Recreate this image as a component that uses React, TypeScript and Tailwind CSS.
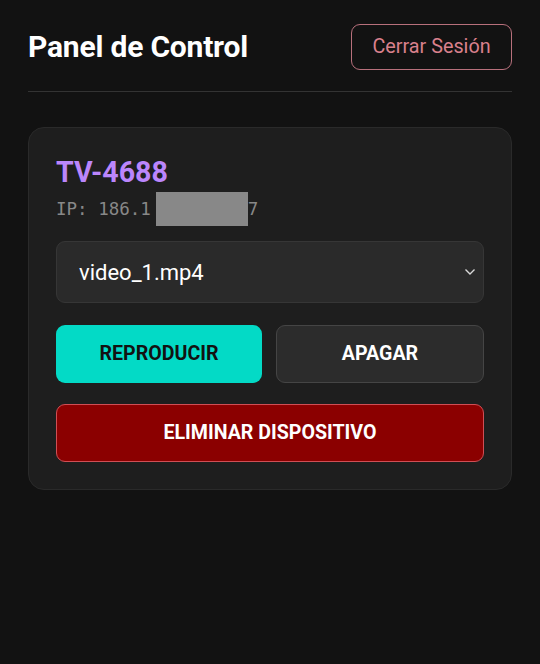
import React from "react";

export default function App() {
  return (
    <div className="min-h-[664px] w-[540px] bg-[#121212] px-[28px] pt-[24px] text-white" style={{ fontFamily: "Roboto, 'Noto Sans', sans-serif" }}>
      <header className="flex items-center justify-between pb-[21px] border-b border-[#333333]">
        <h1 className="text-[30px] font-bold leading-none tracking-[-0.2px]">Panel de Control</h1>
        <button className="h-[46px] w-[161px] rounded-[9px] border border-[#b8707c] text-[19.8px] text-[#d9808c]">Cerrar Sesión</button>
      </header>

      <div className="mt-[35px] rounded-[16px] border border-[#2a2a2a] bg-[#1e1e1e] px-[27px] pt-[27px] pb-[27px]">
        <h2 className="text-[28.6px] font-bold leading-[34px] text-[#bb86fc]">TV-4688</h2>
        <div className="mt-[3px] flex h-[34px] items-center text-[17.5px] text-[#888888]" style={{ fontFamily: "'DejaVu Sans Mono', monospace" }}>
          <span>IP: 186.1</span>
          <span className="ml-[5px] inline-block h-[34px] w-[92px] bg-[#888888]"></span>
          <span className="ml-[0px]">7</span>
        </div>

        <div className="mt-[15px] flex h-[62px] items-center justify-between rounded-[9px] border border-[#363636] bg-[#2a2a2a] pl-[22px] pr-[7px]">
          <span className="text-[22px] text-white">video_1.mp4</span>
          <svg width="12" height="8" viewBox="0 0 12 8" fill="none" stroke="#d8d8d8" strokeWidth="1.4">
            <path d="M1.5 1.5 L6 6 L10.5 1.5" />
          </svg>
        </div>

        <div className="mt-[22px] flex gap-[14px]">
          <button className="h-[58px] w-[206px] rounded-[9px] bg-[#03dac6] text-[19.6px] font-bold text-[#121212]">REPRODUCIR</button>
          <button className="h-[58px] flex-1 rounded-[9px] border border-[#454545] bg-[#2c2c2c] text-[19.6px] font-bold text-white">APAGAR</button>
        </div>

        <button className="mt-[21px] h-[58px] w-full rounded-[9px] border border-[#cf4f55] bg-[#8b0000] text-[19.6px] font-bold text-white">ELIMINAR DISPOSITIVO</button>
      </div>
    </div>
  );
}
